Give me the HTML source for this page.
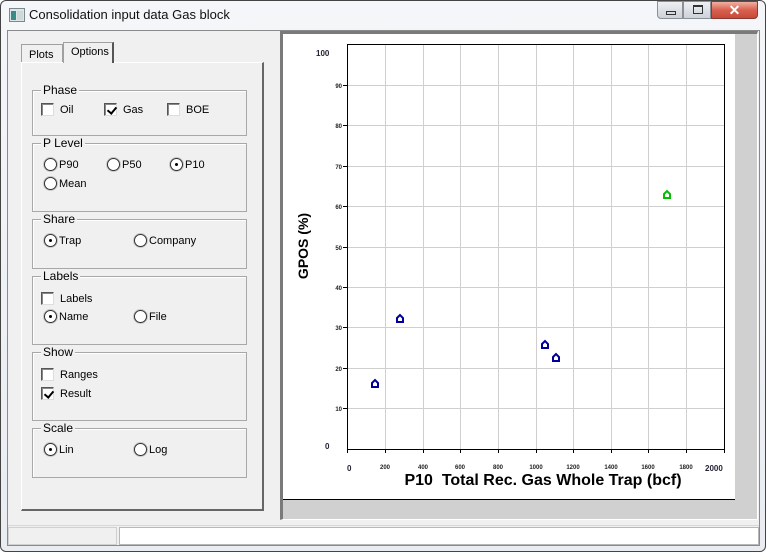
<!DOCTYPE html>
<html><head><meta charset="utf-8"><style>
*{margin:0;padding:0;box-sizing:border-box}
body{width:766px;height:552px;background:#fff;font-family:"Liberation Sans",Arial,sans-serif;font-size:11px;color:#000;position:relative;overflow:hidden}
.a{position:absolute}
.win{left:0;top:0;width:766px;height:552px;border:1px solid #444;border-radius:6px;background:linear-gradient(#f4f6f9,#e9ecf0)}
.client{left:7px;top:30px;width:753px;height:516px;background:#f0f0f0;border:1px solid #8a8a8a}
.grp{position:absolute;left:32px;width:215px;border:1px solid #a8a8a8;box-shadow:inset 1px 1px 0 #fff}
.grp .t{position:absolute;left:8px;top:-8px;background:#f0f0f0;padding:0 2px;font-size:12px}
.cb{position:absolute;width:13px;height:13px;border:1px solid #555;border-right-color:#ddd;border-bottom-color:#ddd;background:#fff;box-shadow:inset 1px 1px 0 #888}
.cb.on::after{content:"";position:absolute;left:4px;top:1px;width:4px;height:7px;border:solid #000;border-width:0 2px 2px 0;transform:rotate(40deg)}
.rb{position:absolute;width:13px;height:13px;border-radius:50%;border:1px solid #333;background:#fff;box-shadow:0 0 0 1px #c8c8c8}
.rb.on::after{content:"";position:absolute;left:4px;top:4px;width:3px;height:3px;background:#000;border-radius:50%}
.lb{position:absolute;font-size:11px;margin-top:1px}
</style></head><body>
<div class="a win"></div>
<svg class="a" style="left:9px;top:8px" width="16" height="14"><rect x="0.5" y="0.5" width="15" height="13" fill="#dfe6e8" stroke="#7a8a8a"/><rect x="2" y="3" width="5" height="9" fill="#3a8a8a"/><rect x="8" y="3" width="6" height="9" fill="#cfd8d8"/></svg>
<div class="a" style="left:29px;top:7px;font-size:13px;color:#111">Consolidation input data Gas block</div>
<div class="a" style="left:657px;top:1px;width:26px;height:18px;border:1px solid #8a8f98;border-radius:0 0 0 4px;background:linear-gradient(#eef0f3,#cdd2d9)"><div class="a" style="left:8px;top:9px;width:10px;height:4px;border:1px solid #333"></div></div>
<div class="a" style="left:683px;top:1px;width:28px;height:18px;border:1px solid #8a8f98;background:linear-gradient(#eef0f3,#cdd2d9)"><div class="a" style="left:9px;top:3px;width:10px;height:9px;border:1px solid #333;border-top-width:2px"></div></div>
<div class="a" style="left:711px;top:1px;width:47px;height:18px;border:1px solid #8a3a30;border-radius:0 0 4px 0;background:linear-gradient(#f0b0a0,#d86050 50%,#c84a38);color:#fff;font-weight:bold;font-size:14px;text-align:center;line-height:16px">✕</div>
<div class="a client"></div>
<!-- tabs -->
<div class="a" style="left:21px;top:44px;width:42px;height:19px;border:1px solid #a0a0a0;border-bottom:none;background:#f0f0f0;padding:4px 0 0 7px">Plots</div>
<div class="a" style="left:63px;top:42px;width:51px;height:21px;border:1px solid #a0a0a0;border-right:2px solid #555;border-bottom:none;background:#f0f0f0;padding:3px 0 0 7px;z-index:2">Options</div>
<div class="a" style="left:21px;top:62px;width:243px;height:449px;border:1px solid #fff;border-right:2px solid #666;border-bottom:2px solid #666;background:#f0f0f0"></div>
<div class="grp" style="top:90px;height:46px"><span class="t">Phase</span></div>
<div class="cb" style="left:41px;top:103px"></div><span class="lb" style="left:60px;top:103px">Oil</span>
<div class="cb on" style="left:104px;top:103px"></div><span class="lb" style="left:123px;top:103px">Gas</span>
<div class="cb" style="left:167px;top:103px"></div><span class="lb" style="left:186px;top:103px">BOE</span>
<div class="grp" style="top:143px;height:69px"><span class="t">P Level</span></div>
<div class="rb" style="left:44px;top:158px"></div><span class="lb" style="left:59px;top:158px">P90</span>
<div class="rb" style="left:107px;top:158px"></div><span class="lb" style="left:122px;top:158px">P50</span>
<div class="rb on" style="left:170px;top:158px"></div><span class="lb" style="left:185px;top:158px">P10</span>
<div class="rb" style="left:44px;top:177px"></div><span class="lb" style="left:59px;top:177px">Mean</span>
<div class="grp" style="top:219px;height:50px"><span class="t">Share</span></div>
<div class="rb on" style="left:44px;top:234px"></div><span class="lb" style="left:59px;top:234px">Trap</span>
<div class="rb" style="left:134px;top:234px"></div><span class="lb" style="left:149px;top:234px">Company</span>
<div class="grp" style="top:276px;height:69px"><span class="t">Labels</span></div>
<div class="cb" style="left:41px;top:292px"></div><span class="lb" style="left:60px;top:292px">Labels</span>
<div class="rb on" style="left:44px;top:310px"></div><span class="lb" style="left:59px;top:310px">Name</span>
<div class="rb" style="left:134px;top:310px"></div><span class="lb" style="left:149px;top:310px">File</span>
<div class="grp" style="top:352px;height:69px"><span class="t">Show</span></div>
<div class="cb" style="left:41px;top:368px"></div><span class="lb" style="left:60px;top:368px">Ranges</span>
<div class="cb on" style="left:41px;top:387px"></div><span class="lb" style="left:60px;top:387px">Result</span>
<div class="grp" style="top:428px;height:50px"><span class="t">Scale</span></div>
<div class="rb on" style="left:44px;top:443px"></div><span class="lb" style="left:59px;top:443px">Lin</span>
<div class="rb" style="left:134px;top:443px"></div><span class="lb" style="left:149px;top:443px">Log</span>
<!-- plot area -->
<div class="a" style="left:280px;top:31px;width:478px;height:489px;background:#d0d0d0;border-left:3px solid #7a7a7a;border-top:3px solid #7a7a7a;border-right:1px solid #fff;border-bottom:1px solid #fff"></div>
<div class="a" style="left:283px;top:34px;width:452px;height:466px;background:#fff;border-bottom:1px solid #000"></div>
<svg class="a" style="left:283px;top:34px" width="452" height="466" font-family="Liberation Sans, Arial, sans-serif">
<g stroke="#cfcfcf" stroke-width="1">
<line x1="102.5" y1="10" x2="102.5" y2="415"/><line x1="140.5" y1="10" x2="140.5" y2="415"/><line x1="177.5" y1="10" x2="177.5" y2="415"/><line x1="215.5" y1="10" x2="215.5" y2="415"/><line x1="253.5" y1="10" x2="253.5" y2="415"/><line x1="290.5" y1="10" x2="290.5" y2="415"/><line x1="328.5" y1="10" x2="328.5" y2="415"/><line x1="365.5" y1="10" x2="365.5" y2="415"/><line x1="403.5" y1="10" x2="403.5" y2="415"/>
<line x1="64" y1="51.5" x2="441" y2="51.5"/><line x1="64" y1="91.5" x2="441" y2="91.5"/><line x1="64" y1="132.5" x2="441" y2="132.5"/><line x1="64" y1="172.5" x2="441" y2="172.5"/><line x1="64" y1="213.5" x2="441" y2="213.5"/><line x1="64" y1="253.5" x2="441" y2="253.5"/><line x1="64" y1="293.5" x2="441" y2="293.5"/><line x1="64" y1="334.5" x2="441" y2="334.5"/><line x1="64" y1="374.5" x2="441" y2="374.5"/>
</g>
<rect x="64.5" y="10.5" width="377" height="405" fill="none" stroke="#000"/>
<g stroke="#000"><line x1="60" y1="51.5" x2="64" y2="51.5"/><line x1="60" y1="91.5" x2="64" y2="91.5"/><line x1="60" y1="132.5" x2="64" y2="132.5"/><line x1="60" y1="172.5" x2="64" y2="172.5"/><line x1="60" y1="213.5" x2="64" y2="213.5"/><line x1="60" y1="253.5" x2="64" y2="253.5"/><line x1="60" y1="293.5" x2="64" y2="293.5"/><line x1="60" y1="334.5" x2="64" y2="334.5"/><line x1="60" y1="374.5" x2="64" y2="374.5"/>
<line x1="64.5" y1="415" x2="64.5" y2="419"/><line x1="102.5" y1="415" x2="102.5" y2="419"/><line x1="140.5" y1="415" x2="140.5" y2="419"/><line x1="177.5" y1="415" x2="177.5" y2="419"/><line x1="215.5" y1="415" x2="215.5" y2="419"/><line x1="253.5" y1="415" x2="253.5" y2="419"/><line x1="290.5" y1="415" x2="290.5" y2="419"/><line x1="328.5" y1="415" x2="328.5" y2="419"/><line x1="365.5" y1="415" x2="365.5" y2="419"/><line x1="403.5" y1="415" x2="403.5" y2="419"/><line x1="441.5" y1="415" x2="441.5" y2="419"/></g>
<g font-size="6" font-weight="bold" fill="#222" text-anchor="end">
<text x="59" y="54">90</text><text x="59" y="94">80</text><text x="59" y="135">70</text><text x="59" y="175">60</text><text x="59" y="216">50</text><text x="59" y="256">40</text><text x="59" y="296">30</text><text x="59" y="337">20</text><text x="59" y="377">10</text></g>
<g font-size="6" font-weight="bold" fill="#222" text-anchor="middle">
<text x="102" y="435">200</text><text x="140" y="435">400</text><text x="177" y="435">600</text><text x="215" y="435">800</text><text x="253" y="435">1000</text><text x="290" y="435">1200</text><text x="328" y="435">1400</text><text x="365" y="435">1600</text><text x="403" y="435">1800</text></g>
<g font-size="8" font-weight="bold" fill="#223"><text x="33" y="22">100</text><text x="42" y="415">0</text><text x="64" y="437">0</text><text x="422" y="437">2000</text></g>
<text x="260" y="451" font-size="16" font-weight="bold" text-anchor="middle">P10&#160; Total Rec. Gas Whole Trap (bcf)</text>
<text transform="translate(25,212) rotate(-90)" font-size="14" font-weight="bold" text-anchor="middle">GPOS (%)</text>
<g fill="none" stroke-width="2">
<path d="M89 349l3-3 3 3v4h-6z" stroke="#000099"/><path d="M114 284l3-3 3 3v4h-6z" stroke="#000099"/><path d="M259 310l3-3 3 3v4h-6z" stroke="#000099"/><path d="M270 323l3-3 3 3v4h-6z" stroke="#000099"/><path d="M381 160l3-3 3 3v4h-6z" stroke="#00c000"/></g>
</svg>
<!-- status bar -->
<div class="a" style="left:8px;top:525px;width:751px;height:1px;background:#d8d8d8"></div>
<div class="a" style="left:8px;top:527px;width:109px;height:18px;border:1px solid #d0d0d0;background:#f0f0f0"></div>
<div class="a" style="left:119px;top:527px;width:640px;height:18px;border:1px solid #b8b8b8;background:#fff"></div>
</body></html>
